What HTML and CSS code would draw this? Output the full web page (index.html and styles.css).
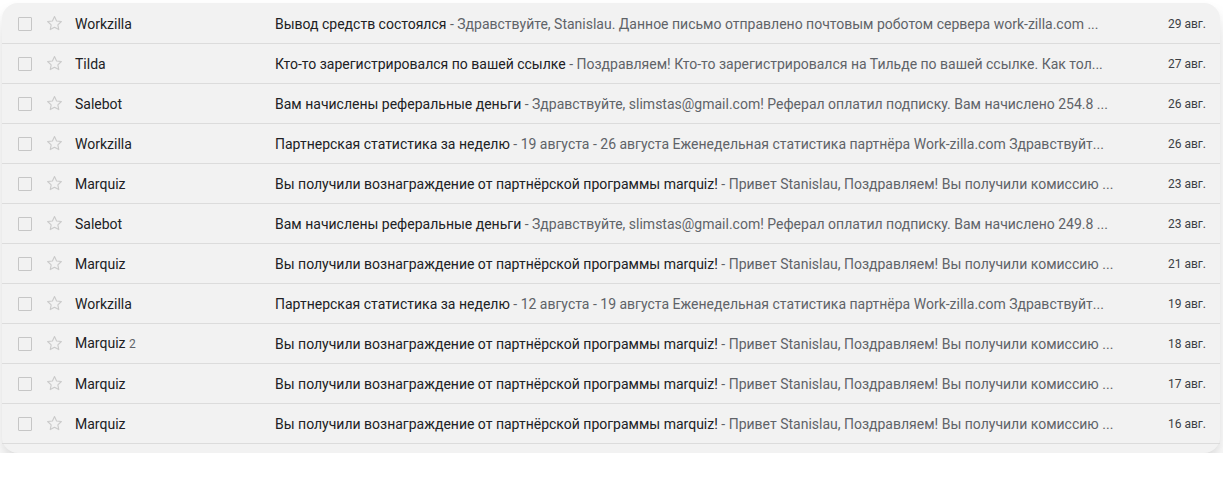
FILE: index.html
```html
<!DOCTYPE html>
<html lang="ru">
<head>
<meta charset="utf-8">
<title>Inbox</title>
<link rel="stylesheet" href="styles.css">
</head>
<body>
<div class="card">
  <div class="row">
    <span class="cb"></span>
    <svg class="star" viewBox="0 0 24 24"><path d="M12 3.2l2.6 5.6 6.1.7-4.5 4.2 1.2 6-5.4-3-5.4 3 1.2-6-4.5-4.2 6.1-.7z"/></svg>
    <span class="sender">Workzilla</span>
    <span class="text"><span class="subj">Вывод средств состоялся</span><span class="snip"> - Здравствуйте, Stanislau. Данное письмо отправлено почтовым роботом сервера work-zilla.com ...</span></span>
    <span class="date">29 авг.</span>
  </div>
  <div class="row">
    <span class="cb"></span>
    <svg class="star" viewBox="0 0 24 24"><path d="M12 3.2l2.6 5.6 6.1.7-4.5 4.2 1.2 6-5.4-3-5.4 3 1.2-6-4.5-4.2 6.1-.7z"/></svg>
    <span class="sender">Tilda</span>
    <span class="text"><span class="subj">Кто-то зарегистрировался по вашей ссылке</span><span class="snip"> - Поздравляем! Кто-то зарегистрировался на Тильде по вашей ссылке. Как тол...</span></span>
    <span class="date">27 авг.</span>
  </div>
  <div class="row">
    <span class="cb"></span>
    <svg class="star" viewBox="0 0 24 24"><path d="M12 3.2l2.6 5.6 6.1.7-4.5 4.2 1.2 6-5.4-3-5.4 3 1.2-6-4.5-4.2 6.1-.7z"/></svg>
    <span class="sender">Salebot</span>
    <span class="text"><span class="subj">Вам начислены реферальные деньги</span><span class="snip"> - Здравствуйте, slimstas@gmail.com! Реферал оплатил подписку. Вам начислено 254.8 ...</span></span>
    <span class="date">26 авг.</span>
  </div>
  <div class="row">
    <span class="cb"></span>
    <svg class="star" viewBox="0 0 24 24"><path d="M12 3.2l2.6 5.6 6.1.7-4.5 4.2 1.2 6-5.4-3-5.4 3 1.2-6-4.5-4.2 6.1-.7z"/></svg>
    <span class="sender">Workzilla</span>
    <span class="text"><span class="subj">Партнерская статистика за неделю</span><span class="snip"> - 19 августа - 26 августа Еженедельная статистика партнёра Work-zilla.com Здравствуйт...</span></span>
    <span class="date">26 авг.</span>
  </div>
  <div class="row">
    <span class="cb"></span>
    <svg class="star" viewBox="0 0 24 24"><path d="M12 3.2l2.6 5.6 6.1.7-4.5 4.2 1.2 6-5.4-3-5.4 3 1.2-6-4.5-4.2 6.1-.7z"/></svg>
    <span class="sender">Marquiz</span>
    <span class="text"><span class="subj">Вы получили вознаграждение от партнёрской программы marquiz!</span><span class="snip"> - Привет Stanislau, Поздравляем! Вы получили комиссию ...</span></span>
    <span class="date">23 авг.</span>
  </div>
  <div class="row">
    <span class="cb"></span>
    <svg class="star" viewBox="0 0 24 24"><path d="M12 3.2l2.6 5.6 6.1.7-4.5 4.2 1.2 6-5.4-3-5.4 3 1.2-6-4.5-4.2 6.1-.7z"/></svg>
    <span class="sender">Salebot</span>
    <span class="text"><span class="subj">Вам начислены реферальные деньги</span><span class="snip"> - Здравствуйте, slimstas@gmail.com! Реферал оплатил подписку. Вам начислено 249.8 ...</span></span>
    <span class="date">23 авг.</span>
  </div>
  <div class="row">
    <span class="cb"></span>
    <svg class="star" viewBox="0 0 24 24"><path d="M12 3.2l2.6 5.6 6.1.7-4.5 4.2 1.2 6-5.4-3-5.4 3 1.2-6-4.5-4.2 6.1-.7z"/></svg>
    <span class="sender">Marquiz</span>
    <span class="text"><span class="subj">Вы получили вознаграждение от партнёрской программы marquiz!</span><span class="snip"> - Привет Stanislau, Поздравляем! Вы получили комиссию ...</span></span>
    <span class="date">21 авг.</span>
  </div>
  <div class="row">
    <span class="cb"></span>
    <svg class="star" viewBox="0 0 24 24"><path d="M12 3.2l2.6 5.6 6.1.7-4.5 4.2 1.2 6-5.4-3-5.4 3 1.2-6-4.5-4.2 6.1-.7z"/></svg>
    <span class="sender">Workzilla</span>
    <span class="text"><span class="subj">Партнерская статистика за неделю</span><span class="snip"> - 12 августа - 19 августа Еженедельная статистика партнёра Work-zilla.com Здравствуйт...</span></span>
    <span class="date">19 авг.</span>
  </div>
  <div class="row">
    <span class="cb"></span>
    <svg class="star" viewBox="0 0 24 24"><path d="M12 3.2l2.6 5.6 6.1.7-4.5 4.2 1.2 6-5.4-3-5.4 3 1.2-6-4.5-4.2 6.1-.7z"/></svg>
    <span class="sender">Marquiz <span class="count">2</span></span>
    <span class="text"><span class="subj">Вы получили вознаграждение от партнёрской программы marquiz!</span><span class="snip"> - Привет Stanislau, Поздравляем! Вы получили комиссию ...</span></span>
    <span class="date">18 авг.</span>
  </div>
  <div class="row">
    <span class="cb"></span>
    <svg class="star" viewBox="0 0 24 24"><path d="M12 3.2l2.6 5.6 6.1.7-4.5 4.2 1.2 6-5.4-3-5.4 3 1.2-6-4.5-4.2 6.1-.7z"/></svg>
    <span class="sender">Marquiz</span>
    <span class="text"><span class="subj">Вы получили вознаграждение от партнёрской программы marquiz!</span><span class="snip"> - Привет Stanislau, Поздравляем! Вы получили комиссию ...</span></span>
    <span class="date">17 авг.</span>
  </div>
  <div class="row">
    <span class="cb"></span>
    <svg class="star" viewBox="0 0 24 24"><path d="M12 3.2l2.6 5.6 6.1.7-4.5 4.2 1.2 6-5.4-3-5.4 3 1.2-6-4.5-4.2 6.1-.7z"/></svg>
    <span class="sender">Marquiz</span>
    <span class="text"><span class="subj">Вы получили вознаграждение от партнёрской программы marquiz!</span><span class="snip"> - Привет Stanislau, Поздравляем! Вы получили комиссию ...</span></span>
    <span class="date">16 авг.</span>
  </div>
</div>
</body>
</html>
```

FILE: styles.css
```css
html, body {
  margin: 0;
  padding: 0;
  background: #ffffff;
}
body {
  font-family: Roboto, "Liberation Sans", Arial, sans-serif;
  color: #202124;
}
.card {
  margin: 3px 3px 0 2px;
  padding: 1px 0 9px;
  background: #f2f2f2;
  border-radius: 16px;
  box-shadow: 0 16px 22px rgba(0, 0, 0, 0.12), 0 3px 6px rgba(0, 0, 0, 0.04);
}
.row {
  display: flex;
  align-items: center;
  height: 40px;
  box-sizing: border-box;
  border-bottom: 1px solid #dcdcdc;
  padding: 0 14px 0 16px;
  font-size: 14px;
  line-height: 20px;
}
.cb {
  flex: none;
  width: 14px;
  height: 14px;
  box-sizing: border-box;
  border: 1.5px solid #c6c6c6;
  border-radius: 1px;
}
.star {
  flex: none;
  width: 19px;
  height: 19px;
  margin-left: 13px;
  fill: none;
  stroke: #cacaca;
  stroke-width: 1.4;
  stroke-linejoin: round;
}
.sender {
  flex: none;
  width: 200px;
  margin-left: 11px;
  color: #202124;
  white-space: nowrap;
}
.count {
  font-size: 12px;
  color: #5f6368;
}
.text {
  flex: 1;
  min-width: 0;
  white-space: nowrap;
  overflow: hidden;
}
.subj {
  color: #202124;
}
.snip {
  color: #5f6368;
}
.date {
  flex: none;
  width: 93px;
  text-align: right;
  font-size: 12px;
  color: #3c4043;
}
```
